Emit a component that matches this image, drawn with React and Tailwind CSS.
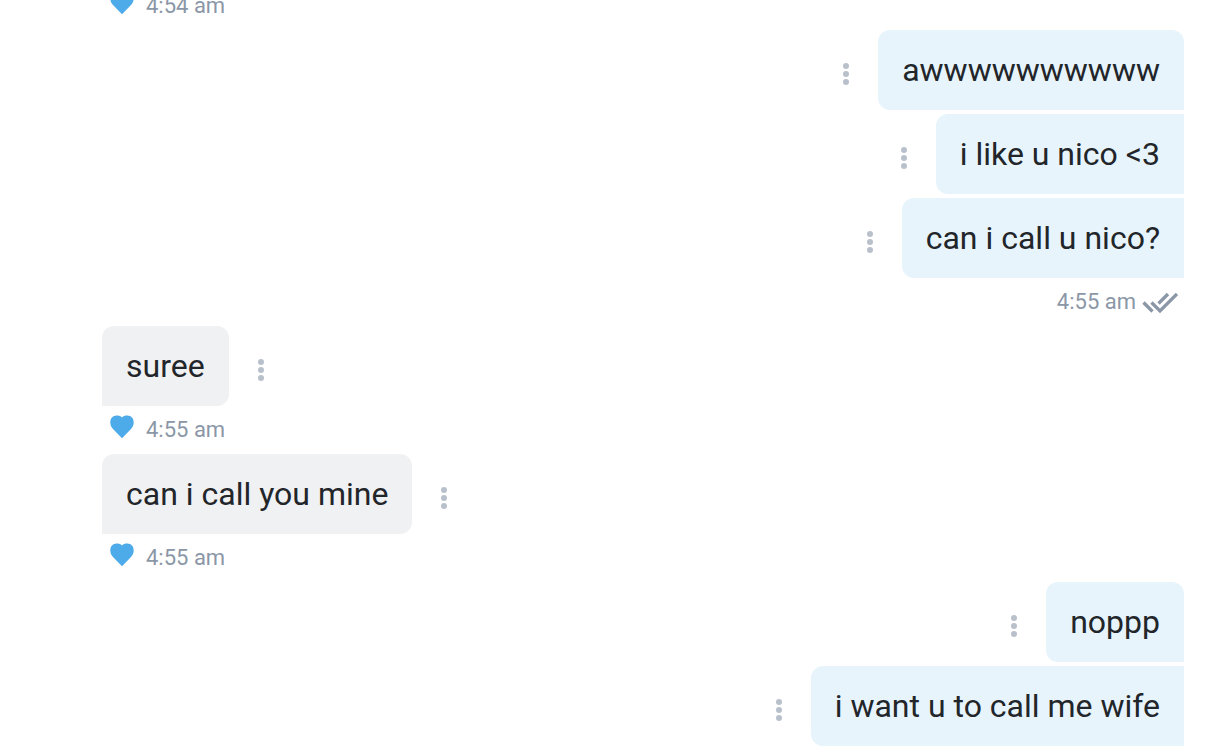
import clsx from 'clsx';

const groups = [
  { id: 1, from: 'them', messages: [], time: '4:54 am' },
  {
    id: 2,
    from: 'me',
    messages: ['awwwwwwwwww', 'i like u nico <3', 'can i call u nico?'],
    time: '4:55 am',
  },
  { id: 3, from: 'them', messages: ['suree'], time: '4:55 am' },
  { id: 4, from: 'them', messages: ['can i call you mine'], time: '4:55 am' },
  { id: 5, from: 'me', messages: ['noppp', 'i want u to call me wife'] },
];

function HeartIcon() {
  return (
    <svg className="w-6 h-6" viewBox="0 0 24 24" fill="#4eabea" aria-hidden="true">
      <path d="M12 23.2L3 14C1.300 12.200.3 10 .3 7.200.3 3.400 3 .6 6.600.6c2.300 0 4.300.6 5.400 1.900C13.100 1.200 15.100.6 17.400.6c3.600 0 6.300 2.800 6.300 6.600 0 2.800-1 5-2.700 6.800z" />
    </svg>
  );
}

function ReadIcon() {
  return (
    <svg
      className="w-9 h-6"
      viewBox="0 0 36 24"
      fill="none"
      stroke="#8b97a6"
      strokeWidth="3.300"
      role="img"
      aria-label="Read"
    >
      <path d="M1.500 12.500l9 9M9.500 12.500l8.500 8.500L35 4M16.500 13.500L26 4" />
    </svg>
  );
}

function MenuButton() {
  return (
    <button type="button" aria-label="Message options" className="mx-6 pt-2 w-4 flex justify-center">
      <svg className="w-4 h-6" viewBox="0 0 16 24" fill="#b8c1cb" aria-hidden="true">
        <circle cx="8" cy="4" r="3" />
        <circle cx="8" cy="12" r="3" />
        <circle cx="8" cy="20" r="3" />
      </svg>
    </button>
  );
}

function Message({ text, mine, first }) {
  return (
    <div className={clsx('flex items-center', mine && 'flex-row-reverse')}>
      <p
        className={clsx(
          'px-6 py-5 text-[32px] leading-10 text-[#222529]',
          mine ? 'bg-[#e7f4fc] rounded-l-xl' : 'bg-[#f0f1f3] rounded-r-xl',
          first && 'rounded-t-xl'
        )}
      >
        {text}
      </p>
      <MenuButton />
    </div>
  );
}

function MessageGroup({ group }) {
  const mine = group.from === 'me';

  return (
    <section className="flex flex-col">
      <div className="flex flex-col gap-1">
        {group.messages.map((text, idx) => (
          <Message key={text} text={text} mine={mine} first={idx === 0} />
        ))}
      </div>

      {/* Time and reaction / read status */}
      {group.time && (
        <div
          className={clsx(
            'h-12 flex items-center text-[22px] leading-6 text-[#8b97a6]',
            mine ? 'justify-end gap-1.5 pr-1.5' : 'gap-3 pl-2'
          )}
        >
          {!mine && (
            <span className="pb-1.5">
              <HeartIcon />
            </span>
          )}
          <time>{group.time}</time>
          {mine && <ReadIcon />}
        </div>
      )}
    </section>
  );
}

export default function App() {
  return (
    <div className="min-h-screen flex flex-col bg-white font-['Roboto',sans-serif] overflow-hidden">
      {/* The thread is scrolled, so its first row is cut off at the top */}
      <main className="-mt-[18px] pl-[102px] pr-12 pb-2 flex flex-col">
        {groups.map((group) => (
          <MessageGroup key={group.id} group={group} />
        ))}
      </main>
    </div>
  );
}
